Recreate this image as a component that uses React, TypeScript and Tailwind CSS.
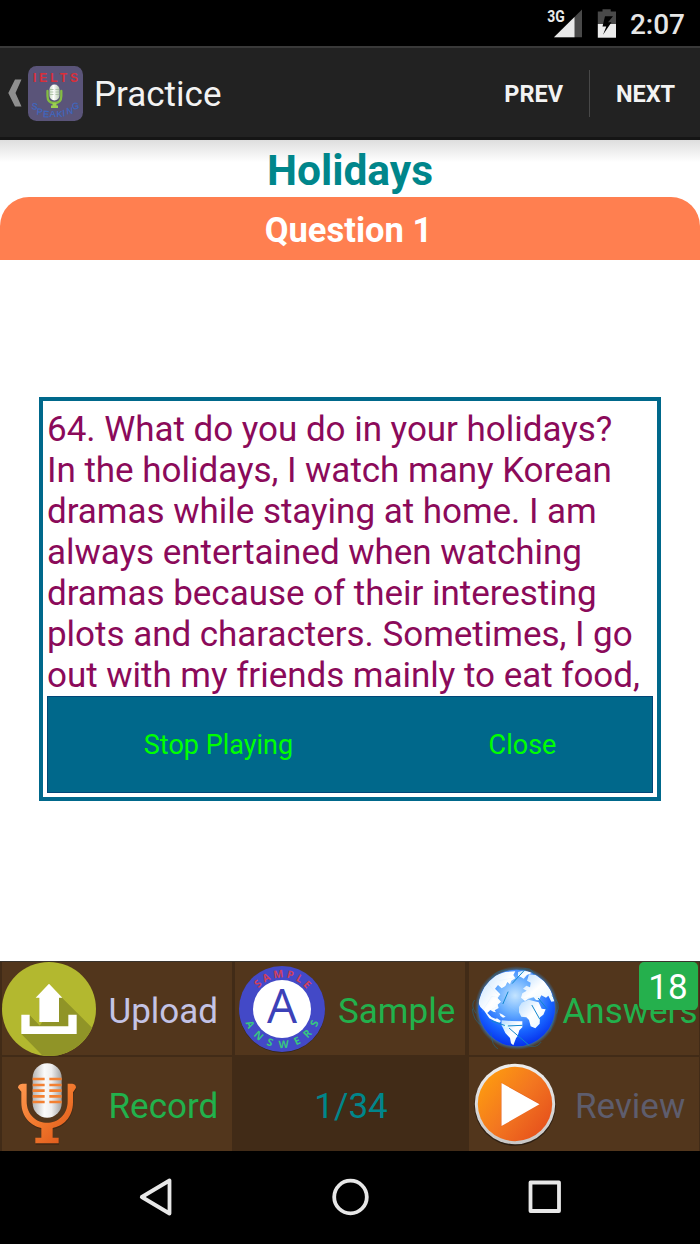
import type { ReactNode } from "react";

const ANSWER_LINES = [
  "64. What do you do in your holidays?",
  "In the holidays, I watch many Korean",
  "dramas while staying at home. I am",
  "always entertained when watching",
  "dramas because of their interesting",
  "plots and characters. Sometimes, I go",
  "out with my friends mainly to eat food,",
];

function StatusBar() {
  return (
    <div className="flex h-[46px] justify-end bg-black pr-[15px] text-[#e6e6e6]">
      <svg width="36" height="46" viewBox="0 0 36 46">
        <path d="M8 37.3 36 9.5V37.3Z" fill="#494949" />
        <path d="M8 37.3 28.5 17V37.3Z" fill="#e9e9e9" />
        <text
          x="1.3"
          y="22"
          fontSize="16"
          fontWeight="700"
          fontFamily="Roboto, sans-serif"
          fill="#e9e9e9"
          stroke="#000"
          strokeWidth="2"
          paintOrder="stroke"
          textLength="17.5"
          lengthAdjust="spacingAndGlyphs"
        >
          3G
        </text>
      </svg>
      <svg width="20" height="46" viewBox="0 0 20 46" className="ml-[15.5px]">
        <path d="M.8 11.5H5.5V9.3H13.7V11.5H19V24H.8Z" fill="#494949" />
        <path d="M.8 24H19V37.7H.8Z" fill="#ececec" />
        <path d="M8 16.3 5.5 26.5H9.3L6 34.7 14.5 22.2H11L16 16.3Z" fill="#000" />
      </svg>
      <span className="ml-[12.5px] pt-2 text-[28px] leading-[33px] font-medium">2:07</span>
    </div>
  );
}

function AppIcon() {
  return (
    <svg width="55" height="55" viewBox="0 0 55 55">
      <defs>
        <linearGradient id="smallMic">
          <stop offset="0" stopColor="#c8dcc0" />
          <stop offset=".4" stopColor="#fff" />
          <stop offset="1" stopColor="#b4c8ae" />
        </linearGradient>
      </defs>
      <rect width="55" height="55" rx="8.5" fill="#5a5479" />
      <text
        x="5"
        y="16"
        fontSize="12"
        fontWeight="700"
        fontFamily="Liberation Sans, sans-serif"
        fill="#d92f3a"
        textLength="45"
      >
        IELTS
      </text>
      <path
        d="M19.5 25V30Q19.5 37 26.3 37Q33.3 37 33.3 30V25M26.3 37V40"
        fill="none"
        stroke="#83bd43"
        strokeWidth="2.3"
        strokeLinecap="round"
      />
      <path d="M24.5 37H28.5V39.5H30V42H23V39.5H24.5Z" fill="#9bce50" />
      <rect x="21.5" y="18.5" width="10" height="16" rx="5" fill="url(#smallMic)" />
      <path
        d="M22 23.5H25.5M27.5 23.5H31M22 26H25.5M27.5 26H31M22 28.5H25.5M27.5 28.5H31"
        stroke="#a2b99a"
        strokeWidth=".8"
      />
      <text
        x="3.3 8.6 15 21.7 28.5 34.7 38.8 44.4"
        y="42.9 48.5 50.9 50.9 50.9 50.2 48.2 43.5"
        rotate="8 5 3 0 0 -4 -5 -8"
        fontSize="9"
        fontFamily="Liberation Sans, sans-serif"
        fill="#3d68c2"
        stroke="#3d68c2"
        strokeWidth=".2"
      >
        SPEAKING
      </text>
    </svg>
  );
}

function ActionBar() {
  return (
    <div className="flex h-[94px] items-center border-t-2 border-b-[3px] border-t-[#393939] border-b-[#151515] bg-[#222] pt-px text-[#f3f3f3]">
      <svg width="14" height="30" viewBox="0 0 14 30" className="ml-2">
        <path d="M7 1.5H13.5L7.5 15 13.5 28.5H7L.3 15Z" fill="#8f8f8f" />
      </svg>
      <div className="ml-1.5">
        <AppIcon />
      </div>
      <h1 className="ml-[11px] pt-[3px] text-[35px] leading-[41px]">Practice</h1>
      <button className="mr-[26px] ml-auto pt-[3px] text-[23.5px] font-bold">PREV</button>
      <div className="h-[47px] w-px bg-[#484848]" />
      <button className="mr-[25px] ml-[26px] pt-[3px] text-[23.5px] font-bold tracking-[-0.1px]">NEXT</button>
    </div>
  );
}

function AnswerDialog() {
  return (
    <div className="mx-[39px] mt-[137px] flex h-[404px] flex-col border-4 border-[#00688b] px-1 pt-2 pb-1">
      <div className="text-[35px] leading-[41px] tracking-[-0.03px] whitespace-nowrap text-[#8b0a5a]">
        {ANSWER_LINES.map((line) => (
          <p key={line}>{line}</p>
        ))}
      </div>
      <div className="flex min-h-0 flex-1 border border-[#004678] bg-[#00688b] pt-0.5 text-[27px] text-[#00ff00]">
        <button className="w-[341px]">Stop Playing</button>
        <button className="flex-1 pl-1">Close</button>
      </div>
    </div>
  );
}

function UploadIcon() {
  return (
    <svg width="94" height="94" viewBox="5 35 282 282">
      <defs>
        <clipPath id="uploadClip">
          <circle cx="146" cy="176" r="141" />
        </clipPath>
      </defs>
      <circle cx="146" cy="176" r="141" fill="#b3b82f" />
      <path
        d="M185 142 320 277V360H170L63 251 88 195 118 226 126 215 117 205V142Z"
        fill="#909427"
        clipPath="url(#uploadClip)"
      />
      <path d="M88 228V195L119 228Z" fill="#909427" />
      <path d="M146 100 186 142H176V215H117V142H106Z" fill="#fff" />
      <path d="M63 193H88V228H204V193H229V251H63Z" fill="#fff" />
    </svg>
  );
}

function MicIcon() {
  return (
    <svg width="60" height="84" viewBox="52 335 180 252">
      <defs>
        <linearGradient id="micStand" x1="0" y1="0" x2="1" y2="1">
          <stop offset="0" stopColor="#ff9850" />
          <stop offset=".55" stopColor="#f0752a" />
          <stop offset="1" stopColor="#d95218" />
        </linearGradient>
        <linearGradient id="micHead">
          <stop offset="0" stopColor="#b5b5b5" />
          <stop offset=".4" stopColor="#fafafa" />
          <stop offset=".65" stopColor="#eee" />
          <stop offset="1" stopColor="#a2a2a2" />
        </linearGradient>
      </defs>
      <path
        d="M81 400V452C81 539 204 539 204 452V400H218Q229 401 229 412L220 426V455C220 503 188 528 159 533V562H177V579H107V562H125V533C96 527 65 503 65 455V424L55 412Q55 401 68 400Z"
        fill="#382310"
        opacity=".6"
        transform="translate(1 4)"
      />
      <path
        d="M81 400V452C81 539 204 539 204 452V400H218Q229 401 229 412L220 426V455C220 503 188 528 159 533V562H177V579H107V562H125V533C96 527 65 503 65 455V424L55 412Q55 401 68 400Z"
        fill="url(#micStand)"
      />
      <rect x="99" y="339" width="87" height="163" rx="43.5" fill="url(#micHead)" />
      <path
        d="M99 386H135M149 386H186M99 404H135M149 404H186M99 421H135M149 421H186M99 438H135M149 438H186M99 455H135M149 455H186"
        stroke="#f38031"
        strokeWidth="8"
      />
    </svg>
  );
}

function SampleIcon() {
  return (
    <svg width="88" height="88" viewBox="-44 -44 88 88">
      <defs>
        <path id="sampleArc" d="M-31.5 0A31.5 31.5 0 0 1 31.5 0" />
        <path id="answersArc" d="M-39 0A39 39 0 0 0 39 0" />
      </defs>
      <circle cy=".7" r="43" fill="#342718" />
      <circle r="43" fill="#4349c7" />
      <circle r="29" fill="#fff" />
      <text y="14.3" fontSize="47.5" textAnchor="middle" fontFamily="Open Sans, sans-serif" fill="#3c41b8">
        A
      </text>
      <g fontSize="10.5" fontWeight="700" fontFamily="Open Sans, sans-serif">
        <text fill="#ce3f5b">
          <textPath href="#sampleArc" startOffset="22.5" textLength="55">
            SAMPLE
          </textPath>
        </text>
        <text fill="#38c681">
          <textPath href="#answersArc" startOffset="14" textLength="95">
            ANSWERS
          </textPath>
        </text>
      </g>
    </svg>
  );
}

function GlobeIcon() {
  return (
    <svg width="90" height="90" viewBox="36 42 270 270">
      <defs>
        <radialGradient id="globeSea" cx=".48" cy=".34" r=".66">
          <stop offset="0" stopColor="#c4e4ff" />
          <stop offset=".35" stopColor="#68aeff" />
          <stop offset=".72" stopColor="#1763ff" />
          <stop offset="1" stopColor="#0732ed" />
        </radialGradient>
        <radialGradient id="globeGlow">
          <stop offset=".86" stopColor="#3c9dff" stopOpacity=".85" />
          <stop offset="1" stopColor="#267ccc" stopOpacity="0" />
        </radialGradient>
        <linearGradient id="globeLand" x1="0" y1="0" x2="1" y2="1">
          <stop offset="0" stopColor="#b9ddff" />
          <stop offset=".5" stopColor="#fff" />
          <stop offset="1" stopColor="#e6f7ff" />
        </linearGradient>
        <clipPath id="globeClip">
          <circle cx="173" cy="174" r="115" />
        </clipPath>
      </defs>
      <circle cx="173" cy="174" r="126" fill="url(#globeGlow)" />
      <circle cx="173" cy="174" r="115" fill="url(#globeSea)" />
      <g fill="url(#globeLand)" clipPath="url(#globeClip)">
        <path d="M61 145 75 112 91 92 111 75 139 66 169 64 163 75 169 85 157 92 153 103 145 96 139 108 128 115 117 105 108 116 124 133 116 144 126 155 116 164 119 174 107 181 111 187 103 185 94 180 85 189 98 202 111 207 107 213 91 205 76 183 64 171 57 156Z" />
        <path d="M177 66 201 60 219 69 204 75 194 86 187 82 177 78Z" />
        <path d="M210 73 230 75 256 94 275 121 286 154 277 155 268 137 261 143 247 136 239 151 231 150 224 142 208 146 198 153 186 143 190 130 203 122 192 116 202 107 213 112 215 98 204 92Z" />
        <path d="M188 158 209 149 226 154 239 157 248 176 260 178 253 194 243 202 242 221 229 235 215 229 210 210 202 202 187 200 180 187 180 171Z" />
        <path d="M128 211 157 213 190 214 190 232 181 241 176 258 171 265 163 286 156 280 153 264 139 249 132 234 127 224Z" />
        <path d="M104 209 114 205 126 213 121 218 109 214ZM121 189 129 193 140 200 132 203 124 197Z" />
      </g>
      <g fill="none" strokeLinecap="round">
        <path
          d="M88 103 134 154 207 209M98 178Q159 145 241 140M122 91 209 77M69 185 98 139 191 152"
          stroke="#9bd6ff"
          opacity=".35"
        />
        <path
          d="M132 161 147 126M160 100 196 61M99 213 142 228 189 226M151 235 208 284M219 166 242 207M238 145 263 175"
          stroke="#1188ce"
          strokeWidth="3"
        />
        <path
          d="M40 177Q43 212 67 226M46 151Q34 166 50 189M279 137Q309 158 293 190M97 83Q112 61 143 60M183 60Q218 47 225 73M96 249Q98 288 116 296M202 284Q231 299 246 277M285 207 273 244"
          stroke="#16739e"
          strokeWidth="1.5"
        />
      </g>
      <circle cx="142" cy="228" r="5" fill="#d8ffff" />
    </svg>
  );
}

function PlayIcon() {
  return (
    <svg width="84" height="84" viewBox="-42 -42 84 84">
      <defs>
        <linearGradient id="playFill" x1="0" y1=".1" x2="1" y2=".9">
          <stop offset="0" stopColor="#ffa00d" />
          <stop offset=".5" stopColor="#f37720" />
          <stop offset="1" stopColor="#e44b1c" />
        </linearGradient>
        <linearGradient id="playRing" x1="0" y1="0" x2="0" y2="1">
          <stop offset="0" stopColor="#eee" />
          <stop offset="1" stopColor="#c9c7c6" />
        </linearGradient>
      </defs>
      <circle cy="1" r="40.8" fill="#261a10" opacity=".8" />
      <circle r="40.2" fill="url(#playRing)" />
      <circle r="37.2" fill="url(#playFill)" />
      <path d="M-14-21.5 25 0-14 22.5Z" fill="#d33f16" opacity=".5" />
      <path d="M-13.5-21 24.5.3-13.5 22Z" fill="#fff" />
    </svg>
  );
}

function Cell({ children, className = "" }: { children?: ReactNode; className?: string }) {
  return (
    <button className={`relative flex items-center text-left text-[35px] leading-[41px] ${className}`}>
      {children}
    </button>
  );
}

function Toolbar() {
  return (
    <div className="grid h-[190px] grid-cols-[230px_230px_230px] grid-rows-[93px_94px] gap-x-[3.5px] gap-y-0.5 border-t border-[#39332c] bg-[#412b17] pl-[1.5px] whitespace-nowrap">
      <Cell className="bg-[#52361c] text-[#c4c3e5]">
        <UploadIcon />
        <span className="ml-[13px] pt-[5px]">Upload</span>
      </Cell>
      <Cell className="bg-[#52361c] text-[#22b14c]">
        <div className="ml-[3px]">
          <SampleIcon />
        </div>
        <span className="ml-[12px] pt-[5px]">Sample</span>
      </Cell>
      <Cell className="bg-[#52361c] text-[#22b14c]">
        <div className="ml-0.5">
          <GlobeIcon />
        </div>
        <span className="ml-0.5 pt-[5px]">Answers</span>
        <span className="absolute top-0 right-px h-[48px] w-[59px] rounded-[5px] bg-[#25b04d] pt-[5px] text-center text-white">
          18
        </span>
      </Cell>
      <Cell className="bg-[#52361c] text-[#22b14c]">
        <div className="ml-[15.5px]">
          <MicIcon />
        </div>
        <span className="ml-[31.5px] pt-1">Record</span>
      </Cell>
      <Cell className="justify-center pt-1 pl-0.5 text-[#00868b]">1/34</Cell>
      <Cell className="bg-[#52361c] text-[#5e5d6d]">
        <div className="ml-1">
          <PlayIcon />
        </div>
        <span className="ml-[18.5px] pt-1">Review</span>
      </Cell>
    </div>
  );
}

function NavBar() {
  return (
    <nav className="flex h-[93px] items-center justify-between bg-black pr-[136px] pb-px pl-[137px]">
      <svg width="38" height="40" viewBox="0 0 38 40" fill="none" stroke="#e7e7e7" strokeWidth="3.8" strokeLinejoin="round">
        <path d="M4.8 20 32.5 3.5V36.5Z" />
      </svg>
      <svg width="40" height="40" viewBox="0 0 40 40" fill="none" stroke="#e7e7e7" strokeWidth="3.8">
        <circle cx="19.5" cy="20" r="16.3" />
      </svg>
      <svg width="38" height="40" viewBox="0 0 38 40" fill="none" stroke="#e7e7e7" strokeWidth="3.8" strokeLinejoin="round">
        <rect x="4.5" y="5.5" width="28.5" height="28.5" />
      </svg>
    </nav>
  );
}

export default function App() {
  return (
    <div className="flex h-[1244px] w-[700px] flex-col overflow-hidden bg-white font-[Roboto,sans-serif]">
      <StatusBar />
      <ActionBar />
      <main className="flex-1">
        <div className="h-[57px] bg-linear-to-b from-[#dedede] to-white to-[22px] pt-1.5 text-center text-[42.5px] leading-[50px] font-bold text-[#00868b]">
          Holidays
        </div>
        <div className="h-[63px] rounded-t-[29px] bg-[#ff7f50] pt-[13px] pr-[3px] text-center text-[34.5px] leading-[41px] font-bold text-white">
          Question 1
        </div>
        <AnswerDialog />
      </main>
      <Toolbar />
      <NavBar />
    </div>
  );
}
